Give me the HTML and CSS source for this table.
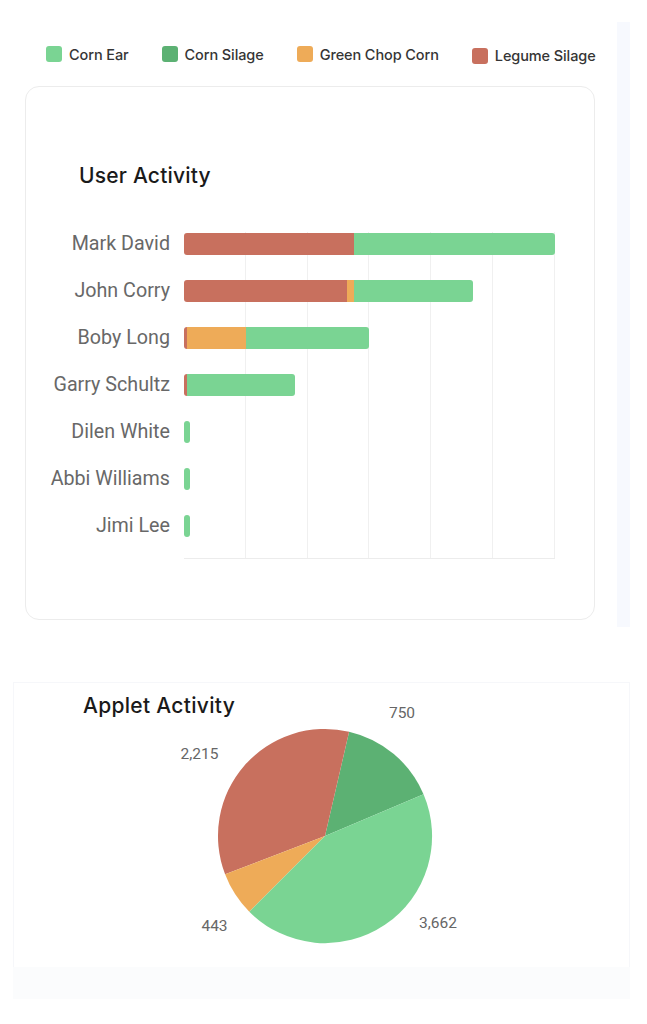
FILE: index.html
```html
<!DOCTYPE html>
<html lang="en">
<head>
<meta charset="utf-8">
<title>Activity</title>
<link rel="stylesheet" href="styles.css">
</head>
<body>
<div class="top">
  <div class="main">
    <ul class="legend">
      <li class="legend-item"><span class="swatch c-ear"></span>Corn Ear</li>
      <li class="legend-item"><span class="swatch c-silage"></span>Corn Silage</li>
      <li class="legend-item"><span class="swatch c-chop"></span>Green Chop Corn</li>
      <li class="legend-item legend-item-low"><span class="swatch c-legume"></span>Legume Silage</li>
    </ul>
    <section class="card">
      <h2 class="card-title">User Activity</h2>
      <div class="chart">
        <div class="labels">
          <div class="label">Mark David</div>
          <div class="label">John Corry</div>
          <div class="label">Boby Long</div>
          <div class="label">Garry Schultz</div>
          <div class="label">Dilen White</div>
          <div class="label">Abbi Williams</div>
          <div class="label">Jimi Lee</div>
        </div>
        <div class="plot">
          <div class="row"><div class="bar"><span class="seg c-legume" style="width:170px"></span><span class="seg c-ear" style="width:201px"></span></div></div>
          <div class="row"><div class="bar"><span class="seg c-legume" style="width:163px"></span><span class="seg c-chop" style="width:7px"></span><span class="seg c-ear" style="width:119px"></span></div></div>
          <div class="row"><div class="bar"><span class="seg c-legume" style="width:3px"></span><span class="seg c-chop" style="width:59px"></span><span class="seg c-ear" style="width:123px"></span></div></div>
          <div class="row"><div class="bar"><span class="seg c-legume" style="width:3px"></span><span class="seg c-ear" style="width:108px"></span></div></div>
          <div class="row"><div class="bar"><span class="seg c-ear" style="width:6px"></span></div></div>
          <div class="row"><div class="bar"><span class="seg c-ear" style="width:6px"></span></div></div>
          <div class="row"><div class="bar"><span class="seg c-ear" style="width:6px"></span></div></div>
        </div>
      </div>
    </section>
  </div>
  <div class="scroll-track"></div>
</div>

<section class="pie-panel">
  <div class="pie-body">
    <h2 class="pie-title">Applet Activity</h2>
    <svg class="pie-svg" width="617" height="285" viewBox="13 682 617 285" xmlns="http://www.w3.org/2000/svg">
      <path class="slice-silage" d="M325 836 L423.5 794.2 A107 107 0 0 0 349.1 731.7 Z"/>
      <path class="slice-legume" d="M325 836 L349.1 731.7 A107 107 0 0 0 225.1 874.3 Z"/>
      <path class="slice-chop" d="M325 836 L225.1 874.3 A107 107 0 0 0 249.3 911.7 Z"/>
      <path class="slice-ear" d="M325 836 L249.3 911.7 A107 107 0 0 0 423.5 794.2 Z"/>
      <text class="pie-label" x="402" y="713">750</text>
      <text class="pie-label" x="199.5" y="754">2,215</text>
      <text class="pie-label" x="214.5" y="926">443</text>
      <text class="pie-label" x="438" y="923">3,662</text>
    </svg>
  </div>
  <div class="pie-foot"></div>
</section>
</body>
</html>
```

FILE: styles.css
```css
* {
  box-sizing: border-box;
}

body {
  margin: 0;
  background: #ffffff;
  font-family: "Inter", "Roboto", sans-serif;
  color: #1c1c1c;
}

.top {
  display: flex;
  margin-left: 13px;
  width: 617px;
  padding-top: 22px;
}

.main {
  flex: 1;
  padding-bottom: 7px;
}

.scroll-track {
  width: 13px;
  background: #f7f9fe;
}

.legend {
  list-style: none;
  margin: 22px 0 0 0;
  padding: 0 0 0 33px;
  height: 20px;
  display: flex;
  gap: 33px;
  align-items: center;
}

.legend-item {
  display: flex;
  align-items: center;
  gap: 7px;
  font-size: 14.5px;
  font-weight: 500;
  color: #353535;
  letter-spacing: -0.1px;
  white-space: nowrap;
}

.legend-item-low {
  margin-top: 3px;
}

.swatch {
  width: 16px;
  height: 16px;
  border-radius: 3px;
  display: block;
}

.c-ear { background: #7ad493; }
.c-silage { background: #5cb173; }
.c-chop { background: #eeab58; }
.c-legume { background: #c8705e; }

.card {
  margin: 22px 0 0 12px;
  width: 570px;
  height: 534px;
  border: 1px solid #ececec;
  border-radius: 14px;
  padding-top: 76px;
  background: #fff;
}

.card-title {
  margin: 0 0 32px 53px;
  font-size: 21px;
  line-height: 25px;
  font-weight: 500;
  color: #1a1a1a;
  letter-spacing: 0.2px;
}

.chart {
  display: grid;
  grid-template-columns: 120px 371px;
  column-gap: 14px;
  margin-left: 24px;
}

.labels {
  display: flex;
  flex-direction: column;
}

.label {
  height: 47px;
  line-height: 47px;
  text-align: right;
  font-family: "Roboto", "Liberation Sans", sans-serif;
  font-size: 19.7px;
  color: #686868;
  white-space: nowrap;
}

.plot {
  width: 371px;
  padding-bottom: 9px;
  border-bottom: 1px solid #ececec;
  background-image: repeating-linear-gradient(to right, transparent 0, transparent 60.83px, #f0f0f0 60.83px, #f0f0f0 61.83px);
  background-size: 100% calc(100% - 12px);
  background-position: left bottom;
  background-repeat: no-repeat;
}

.row {
  height: 47px;
  display: flex;
  align-items: center;
}

.bar {
  display: flex;
  height: 22px;
  border-radius: 3px;
  overflow: hidden;
}

.seg {
  display: block;
  height: 100%;
}

.pie-panel {
  margin: 55px 0 0 13px;
  width: 617px;
}

.pie-body {
  display: grid;
  height: 285px;
  background: #fff;
  border: 1px solid #f6f7fa;
  border-bottom: none;
}

.pie-title {
  grid-area: 1 / 1;
  align-self: start;
  justify-self: start;
  margin: 10px 0 0 69px;
  font-size: 21px;
  line-height: 25px;
  font-weight: 500;
  color: #1a1a1a;
  letter-spacing: 0.3px;
  position: relative;
  z-index: 1;
}

.pie-svg {
  grid-area: 1 / 1;
  margin: -1px 0 0 -1px;
  display: block;
}

.slice-ear { fill: #7ad493; }
.slice-silage { fill: #5cb173; }
.slice-chop { fill: #eeab58; }
.slice-legume { fill: #c8705e; }

.pie-label {
  font-family: "Roboto", "Liberation Sans", sans-serif;
  font-size: 15.5px;
  fill: #666;
  text-anchor: middle;
  dominant-baseline: central;
}

.pie-foot {
  height: 32px;
  background: #fbfcfd;
}
```
